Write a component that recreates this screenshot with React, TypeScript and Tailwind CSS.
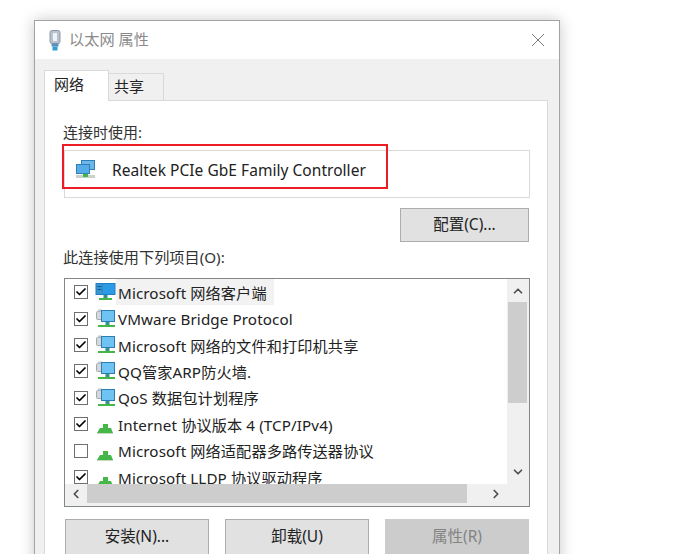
import { Check, ChevronDown, ChevronLeft, ChevronRight, ChevronUp } from 'lucide-react';

type RowKind = 'client' | 'service' | 'protocol';

const rows: { label: string; kind: RowKind; checked: boolean; active?: boolean }[] = [
  { label: 'Microsoft 网络客户端', kind: 'client', checked: true, active: true },
  { label: 'VMware Bridge Protocol', kind: 'service', checked: true },
  { label: 'Microsoft 网络的文件和打印机共享', kind: 'service', checked: true },
  { label: 'QQ管家ARP防火墙.', kind: 'service', checked: true },
  { label: 'QoS 数据包计划程序', kind: 'service', checked: true },
  { label: 'Internet 协议版本 4 (TCP/IPv4)', kind: 'protocol', checked: true },
  { label: 'Microsoft 网络适配器多路传送器协议', kind: 'protocol', checked: false },
  { label: 'Microsoft LLDP 协议驱动程序', kind: 'protocol', checked: true },
];

function PlugIcon() {
  return (
    <svg width="12" height="21" viewBox="0 0 12 21" className="shrink-0">
      <rect x="1" y="0.5" width="10" height="13" rx="2" fill="#b9c3cf" stroke="#8d99a6" />
      <rect x="4" y="3" width="4" height="8" fill="#eef2f6" />
      <rect x="2.5" y="13.5" width="7" height="3" fill="#5a8fc0" />
      <rect x="3.5" y="16.5" width="5" height="4" fill="#2f9fd0" />
    </svg>
  );
}

function AdapterIcon() {
  return (
    <svg width="21" height="20" viewBox="0 0 21 20" className="shrink-0">
      <rect x="1" y="16" width="19" height="3" fill="#c9d2c9" />
      <rect x="8" y="13" width="5" height="5" fill="#45b648" />
      <rect x="6" y="1" width="14" height="10" fill="#2f7fb8" />
      <rect x="7" y="2" width="12" height="8" fill="#6cb7e8" />
      <rect x="1" y="5" width="14" height="10" fill="#2f7fb8" />
      <rect x="2" y="6" width="12" height="8" fill="#56ace6" />
    </svg>
  );
}

function RowIcon({ kind }: { kind: RowKind }) {
  if (kind === 'protocol') {
    return (
      <svg width="21" height="20" viewBox="0 0 21 20" className="shrink-0">
        <rect x="8" y="10" width="5" height="5" fill="#45b648" />
        <path d="M5 14 H16 L18 19 H2 Z" fill="#45b648" />
        <rect x="2" y="19" width="16" height="1" fill="#c4d8c4" />
      </svg>
    );
  }
  if (kind === 'client') {
    return (
      <svg width="21" height="20" viewBox="0 0 21 20" className="shrink-0">
        <rect x="0.5" y="1" width="20" height="12" fill="#1f7fc4" />
        <rect x="1.5" y="2" width="6" height="10" fill="#3a95d0" />
        <rect x="2.5" y="4" width="4" height="1" fill="#0e5c94" />
        <rect x="2.5" y="7" width="4" height="1" fill="#0e5c94" />
        <rect x="8" y="2" width="11.5" height="10" fill="#2b9be6" />
        <rect x="8.5" y="13" width="4" height="3" fill="#3a8f8f" />
        <rect x="4" y="16" width="13" height="2" fill="#45b648" />
      </svg>
    );
  }
  return (
    <svg width="21" height="20" viewBox="0 0 21 20" className="shrink-0">
      <rect x="1.5" y="2.5" width="7" height="8" rx="1" fill="#d4d8dc" stroke="#a3a9af" />
      <rect x="3" y="0.5" width="4" height="2" fill="#c2c7cc" />
      <rect x="6" y="1" width="14" height="12" fill="#2d7db5" />
      <rect x="7" y="2" width="12" height="10" fill="#6fc3f2" />
      <rect x="10.5" y="13" width="4" height="3" fill="#3a8f8f" />
      <rect x="3" y="16" width="17" height="2" fill="#45b648" />
    </svg>
  );
}

function Checkbox({ checked }: { checked: boolean }) {
  return (
    <span className="flex size-[14px] shrink-0 items-center justify-center border border-[#6f6f6f] bg-white">
      {checked && <Check className="size-[12px] text-black" strokeWidth={3.5} />}
    </span>
  );
}

function DialogButton({ label, disabled }: { label: string; disabled?: boolean }) {
  return (
    <button
      className={
        disabled
          ? 'h-[36px] w-[144px] border border-[#cccccc] bg-[#cccccc] text-[15.5px] text-[#838383]'
          : 'h-[36px] w-[144px] border border-[#adadad] bg-[#e1e1e1] text-[15.5px] text-[#222222]'
      }
    >
      {label}
    </button>
  );
}

export default function App() {
  return (
    <div
      className="relative h-[554px] w-[697px] overflow-hidden bg-white pl-[34px] pt-[20px]"
      style={{ fontFamily: '"Noto Sans", "Noto Sans CJK SC", sans-serif' }}
    >
      <div className="flex h-[600px] w-[526px] flex-col border border-[#a3a3a3] bg-[#f0f0f0] shadow-[0_0_14px_rgba(0,0,0,0.22)]">
        {/* title bar */}
        <div className="flex h-[38px] shrink-0 items-center bg-white pl-[14px] pr-[14px]">
          <PlugIcon />
          <span className="-mt-[2px] ml-[8px] text-[15.2px] text-[#8a8a8a]">以太网 属性</span>
          <svg width="14" height="14" viewBox="0 0 14 14" className="ml-auto">
            <path d="M1 1 L13 13 M13 1 L1 13" stroke="#7a7a7a" strokeWidth="1" fill="none" />
          </svg>
        </div>

        <div className="flex flex-1 flex-col pl-[9px] pr-[11px] pt-[11px]">
          {/* tabs */}
          <div className="relative z-10 flex h-[30px] shrink-0 items-end">
            <div className="-mb-px flex h-[31px] w-[65px] items-center border border-b-0 border-[#d9d9d9] bg-white pb-[4px] pl-[9px] text-[15px] text-[#222222]">
              网络
            </div>
            <div className="flex h-[27px] w-[55px] items-center border border-l-0 border-b-0 border-[#d9d9d9] bg-[#f0f0f0] pb-[2px] pl-[5px] text-[15px] text-[#222222]">
              共享
            </div>
          </div>

          {/* panel */}
          <div className="flex flex-1 flex-col border border-[#d9d9d9] bg-white pl-[19px] pr-[17px]">
            <div className="mt-[21px] -ml-px h-[21px] text-[15px] leading-[21px] text-[#333333]">连接时使用:</div>

            <div className="mt-[7px] flex h-[48px] w-[466px] items-start border border-[#d9d9d9] pl-[10px] pt-[8px]">
              <AdapterIcon />
              <span className="ml-[16px] mt-px text-[15.5px] leading-[20px] tracking-[0.04px] text-[#222222]">
                Realtek PCIe GbE Family Controller
              </span>
            </div>

            <div className="mt-[10px] flex w-[465px] justify-end">
              <button className="h-[34px] w-[129px] border border-[#adadad] bg-[#e1e1e1] text-[15.5px] text-[#222222]">
                配置(C)...
              </button>
            </div>

            <div className="mt-[5px] -ml-px h-[21px] text-[15.2px] leading-[21px] text-[#333333]">此连接使用下列项目(O):</div>

            {/* component list */}
            <div className="mt-[10px] flex h-[229px] w-[466px] shrink-0 border border-[#82878c] bg-[#f0f0f0]">
              <div className="flex w-[442px] flex-col">
                <div className="h-[205px] overflow-hidden bg-white">
                  {rows.map((row) => (
                    <div key={row.label} className="flex h-[26.4px] items-center pl-[9px]">
                      <Checkbox checked={row.checked} />
                      <span className="ml-[7px]">
                        <RowIcon kind={row.kind} />
                      </span>
                      <span
                        className={
                          row.active
                            ? 'flex h-[26px] items-center whitespace-nowrap bg-[#f2f2f2] pl-[2px] pr-[7px] pt-[2px] text-[15.2px] tracking-[0.1px] text-[#222222]'
                            : 'flex h-[26px] items-center whitespace-nowrap pl-[2px] pr-[7px] pt-[2px] text-[15.2px] tracking-[0.1px] text-[#222222]'
                        }
                      >
                        {row.label}
                      </span>
                    </div>
                  ))}
                </div>
                <div className="flex h-[22px] shrink-0 items-start">
                  <span className="flex h-[20px] w-[22px] items-center justify-center">
                    <ChevronLeft className="size-[14px] text-[#505050]" strokeWidth={3} />
                  </span>
                  <span className="h-[19px] w-[380px] bg-[#cdcdcd]" />
                  <span className="flex h-[20px] flex-1 items-center pl-[22px]">
                    <ChevronRight className="size-[14px] text-[#505050]" strokeWidth={3} />
                  </span>
                </div>
              </div>
              <div className="flex w-[22px] flex-col pr-[2px]">
                <span className="flex h-[23px] items-center justify-center pl-px">
                  <ChevronUp className="size-[14px] text-[#505050]" strokeWidth={3} />
                </span>
                <span className="ml-px h-[101px] w-[19px] bg-[#cdcdcd]" />
                <span className="flex h-[76px] items-end justify-center pl-px">
                  <ChevronDown className="size-[14px] text-[#505050]" strokeWidth={3} />
                </span>
              </div>
            </div>

            <div className="mt-[12px] flex w-[465px] justify-between pl-px">
              <DialogButton label="安装(N)..." />
              <DialogButton label="卸载(U)" />
              <DialogButton label="属性(R)" disabled />
            </div>
          </div>
        </div>
      </div>

      {/* red annotation */}
      <div className="absolute left-[62px] top-[144px] h-[45px] w-[326px] border-2 border-[#ed1c24]" />
    </div>
  );
}
